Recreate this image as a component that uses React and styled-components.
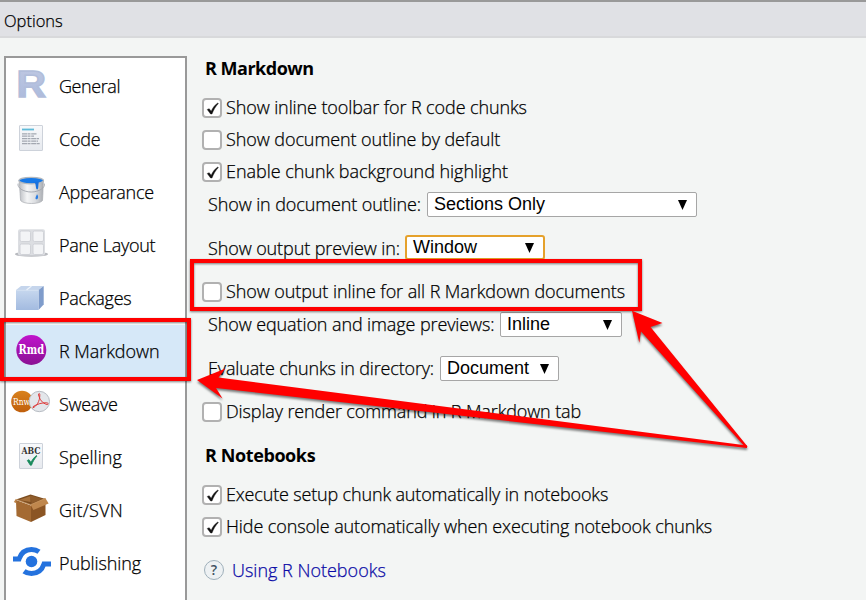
import React from 'react';
import styled, { createGlobalStyle, css } from 'styled-components';

const GlobalStyle = createGlobalStyle`
  *, *::before, *::after { box-sizing: border-box; }
  body { margin: 0; overflow: hidden; background: #f3f5f4; }
`;

const Dialog = styled.div`
  position: relative;
  display: flex;
  flex-direction: column;
  width: 866px;
  height: 600px;
  overflow: hidden;
  background: #f3f5f4;
  color: #000;
  font-family: 'Open Sans', 'Noto Sans', sans-serif;
  font-size: 18px;
  font-weight: 300;
`;

const TitleBar = styled.header`
  flex: none;
  height: 38px;
  padding: 0 4px;
  border-top: 2px solid #999;
  border-bottom: 2px solid #d8d9db;
  background: #e0e1e5;
  font-size: 16.5px;
  line-height: 38px;
`;

const Body = styled.div`
  display: flex;
  align-items: flex-start;
  padding: 18px 0 0 4px;
`;

const Sidebar = styled.nav`
  flex: none;
  width: 183px;
  height: 560px;
  padding-top: 2px;
  border: 2px solid #999;
  background: #fff;
`;

const NavItem = styled.div`
  display: flex;
  align-items: center;
  height: 53px;
  padding-left: 4px;
  background: ${(p) => (p.$active ? '#d6e8f8' : 'transparent')};
`;

const NavIcon = styled.svg`
  flex: none;
  display: block;
  width: 44px;
  height: 53px;
`;

const NavLabel = styled.span`
  margin-left: 5px;
  padding-bottom: 2px;
  line-height: 26px;
`;

const Text = styled.span`
  white-space: nowrap;
  letter-spacing: ${(p) => p.$track || 0}px;
  -webkit-text-stroke: 0.25px currentColor;
`;

const Panel = styled.main`
  display: flex;
  flex-direction: column;
  padding-left: 15px;
`;

const Row = styled.div`
  display: flex;
  align-items: center;
  height: 26px;
  margin-top: ${(p) => p.$gap}px;
  line-height: 26px;
`;

const OptionRow = styled(Row)`
  line-height: 24px;

  & > ${Text} {
    padding-bottom: 2px;
  }
`;

const SelectRow = styled(Row)`
  align-items: flex-start;
  padding-left: 6px;
  line-height: ${(p) => (p.$focused ? 26 : 24)}px;
`;

const Heading = styled.h2`
  height: 26px;
  margin: ${(p) => p.$gap}px 0 0;
  padding-left: 3px;
  font-size: 18px;
  font-weight: 700;
  line-height: 24px;

  & > ${Text} {
    -webkit-text-stroke: 0;
  }
`;

const Box = styled.span`
  flex: none;
  display: flex;
  width: 20px;
  height: 20px;
  margin-right: 4px;
  border: 2px solid #b1b1b1;
  border-radius: 4px;
  background: #fff;
`;

const Select = styled.div`
  flex: none;
  display: flex;
  align-items: center;
  justify-content: space-between;
  width: ${(p) => p.$width}px;
  height: 25px;
  margin-left: ${(p) => p.$offset}px;
  padding: 0 9px 2px 6px;
  border: 1px solid #a6a6a6;
  border-radius: 2px;
  background: #fff;
  font-family: 'Liberation Sans', Arial, sans-serif;
  font-size: 18px;
  font-weight: 400;
  ${(p) => p.$focused && css`
    border: 2px solid #e5a12b;
    border-radius: 3px;
  `}
`;

const Caret = styled.svg`
  display: block;
  width: 9px;
  height: 10px;
  margin-top: 2px;
`;

const HelpMark = styled.span`
  flex: none;
  width: 20px;
  height: 20px;
  margin: 0 8px 0 2px;
  border: 1px solid #9fb0bb;
  border-radius: 50%;
  background: #edf1f3;
  color: #3d5060;
  font-size: 14px;
  font-weight: 600;
  line-height: 18px;
  text-align: center;
`;

const Link = styled(Text)`
  color: #0a0aa6;
`;

const Highlight = styled.div`
  position: absolute;
  left: ${(p) => p.$x}px;
  top: ${(p) => p.$y}px;
  width: ${(p) => p.$w}px;
  height: ${(p) => p.$h}px;
  border: 4px solid #f00;
  filter: drop-shadow(0 1.5px 1px rgba(0, 0, 0, 0.5));
`;

const Arrows = styled.svg`
  position: absolute;
  inset: 0;
  width: 866px;
  height: 600px;
  filter: drop-shadow(0 2px 1.2px rgba(0, 0, 0, 0.5));
`;

const Page = ({ children }) => (
  <>
    <rect x="9.5" y="12.5" width="23" height="25" rx="0.5" fill="url(#paper)" stroke="#cdd2da" />
    {children}
  </>
);

const icons = {
  general: (
    <text x="6.6" y="37.4" fontFamily="Liberation Sans" fontWeight="700" fontSize="37" textLength="29.5" lengthAdjust="spacingAndGlyphs" fill="url(#rfill)" stroke="#b1bdda" strokeWidth="1.5">R</text>
  ),
  code: (
    <Page>
      <path d="M12 16.5h12" stroke="#5fbad8" strokeWidth="1.8" />
      <path d="M12 20.8h15M12 23.2h12M12 25.7h17M12 28.2h16M12 30.7h18" stroke="#a3a8b1" strokeWidth="1.3" strokeDasharray="5 .5 3 .7" />
    </Page>
  ),
  appearance: (
    <>
      <path d="M9 14c1 9 1 14 1.6 20.5 3 4 19 4 21.9 0C33 28 33 22 33.4 14z" fill="url(#metal)" stroke="#a8abb0" strokeWidth="0.7" />
      <ellipse cx="21.2" cy="14.6" rx="12.3" ry="3.2" fill="#1679e8" stroke="#b3b8be" strokeWidth="1.2" />
      <path d="M23 16c2.5.2 2.500 2 3 5.500.3 2.600 2 2.600 2.200 0l.5-6z" fill="#1771df" />
      <path d="M25.500 32.200c0-2 1.300-3 1.500-4 1.200 1.200 1.500 3.500.6 4.500-.7.8-2.100.7-2.100-.5z" fill="#2a7de4" />
      <path d="M8.200 17.500c-1.500 4 5 8.500 13 8.500s14.500-4.500 13-8.500" fill="none" stroke="#a0a5ad" strokeWidth="0.9" />
    </>
  ),
  panes: (
    <>
      <ellipse cx="21.5" cy="35.2" rx="16.5" ry="2.6" fill="#b9bbc0" />
      <rect x="8" y="10.2" width="27" height="26.3" rx="2" fill="#dcdee2" />
      {[[10, 12], [23, 12], [10, 25], [23, 25]].map(([x, y]) => (
        <rect key={`${x}-${y}`} x={x} y={y} width="10.5" height="10.5" rx="1.5" fill="#f3f4f6" stroke="#c9ccd2" strokeWidth="0.8" />
      ))}
    </>
  ),
  packages: (
    <>
      <path d="M6 18l5-4h22.700l-5.200 4z" fill="#c5d5ec" />
      <path d="M28.500 18l5.200-4v18.500l-5.200 5.500z" fill="#7f9ccb" />
      <rect x="6" y="18" width="22.5" height="20" fill="url(#cube)" />
      <path d="M16.500 18l5-4" stroke="#eef4fb" strokeWidth="1.2" />
      <path d="M6.300 18.300h22.200" stroke="#dbe6f4" strokeWidth="0.7" />
    </>
  ),
  rmarkdown: (
    <>
      <circle cx="21.3" cy="25" r="15" fill="url(#purple)" />
      <text x="21.3" y="28.8" textAnchor="middle" textLength="25.5" lengthAdjust="spacingAndGlyphs" fontFamily="DejaVu Serif" fontWeight="700" fontSize="12" fill="#fff">Rmd</text>
    </>
  ),
  sweave: (
    <>
      <circle cx="12" cy="23.5" r="10.8" fill="url(#orange)" />
      <text x="3" y="27" textLength="17" lengthAdjust="spacingAndGlyphs" fontFamily="DejaVu Serif" fontSize="9" fill="#fff">Rnw</text>
      <circle cx="29.3" cy="23.5" r="10.2" fill="#e3e6ea" stroke="#b7bcc3" strokeWidth="1" />
      <path d="M22.500 30c4-1.500 7.500-6.500 7.300-13.500-.1-1.600-1.600-1.300-1.200.5 1 4.500 4 8.500 8.400 9.500 1.600.2 1.500-1.600-.2-1.700-4.300-.3-9.500 1-14 4" fill="none" stroke="#dd3b3b" strokeWidth="1" />
    </>
  ),
  spelling: (
    <Page>
      <text x="11.5" y="22.5" textLength="19" lengthAdjust="spacingAndGlyphs" fontFamily="DejaVu Serif" fontWeight="700" fontSize="8.5" fill="#333">ABC</text>
      <path d="M17.300 29.500l1.700-.8 2 2.800c1-2.500 3-5 5.500-7l.3.700c-2.300 2.500-4 5.500-5.300 9h-1.200z" fill="#16895b" stroke="#16895b" strokeWidth="0.8" />
    </Page>
  ),
  git: (
    <>
      <path d="M6 15.500l14.500-5 15 4.500-14.500 6z" fill="#7c4d20" />
      <path d="M9 16l11.500-4v6z" fill="#a8713a" />
      <path d="M20.500 11.500l12 3.500-11 4.500z" fill="#8f5c2b" />
      <path d="M6 16l15 5.500V38L6.500 32z" fill="#a46a32" />
      <path d="M21 21.500l14.500-6V31L21 38z" fill="#8b5524" />
      <path d="M6 14.700L3.800 18l2.500 1.200z" fill="#bd8449" />
      <path d="M35.300 14l3.300 5.500-15.200 6.500-2.800-5.300z" fill="#bf874d" />
      <path d="M6 15.300l14.600 5.400 14.700-6.200" fill="none" stroke="#c8965f" strokeWidth="0.8" />
    </>
  ),
  publishing: (
    <>
      <circle cx="21.5" cy="24.5" r="5.8" fill="#2472de" />
      <path d="M3 22h6C11 16 15.500 12.500 21.500 12.500c3 0 5.500.8 7.500 2.300" fill="none" stroke="#2472de" strokeWidth="5" />
      <path d="M41 27h-7c-2 6-6.500 9.500-12.500 9.500-3 0-5.500-.8-7.500-2.300" fill="none" stroke="#2472de" strokeWidth="5" />
    </>
  ),
};

const Gradient = ({ id, stops, across }) => (
  <linearGradient id={id} x1="0" y1="0" x2={across ? 1 : 0} y2={across ? 0 : 1}>
    {stops.map((color, i) => (
      <stop key={i} offset={i / (stops.length - 1)} stopColor={color} />
    ))}
  </linearGradient>
);

const Definitions = styled.svg`
  position: absolute;
  width: 0;
  height: 0;
`;

const Check = () => (
  <svg width="16" height="16" viewBox="0 0 16 16">
    <path d="M3.200 9.500l2-.8 2 2.600C8.500 8 10.500 5.200 13.800 3l.6.500C11.600 6.500 9.600 9.800 8 14H6.600z" fill="#111" stroke="#111" strokeWidth="0.4" />
  </svg>
);

const Option = ({ gap, checked, track, children }) => (
  <OptionRow $gap={gap}>
    <Box role="checkbox" aria-checked={!!checked}>{checked && <Check />}</Box>
    <Text $track={track}>{children}</Text>
  </OptionRow>
);

const Choice = ({ gap, label, track, value, width, offset, focused }) => (
  <SelectRow $gap={gap} $focused={focused}>
    <Text $track={track}>{label}</Text>
    <Select $width={width} $offset={offset} $focused={focused}>
      {value}
      <Caret viewBox="0 0 9 10"><path d="M0 0h9L4.500 10z" /></Caret>
    </Select>
  </SelectRow>
);

const sections = [
  ['general', 'General', -0.42],
  ['code', 'Code', -0.2],
  ['appearance', 'Appearance', -0.23],
  ['panes', 'Pane Layout', -0.3],
  ['packages', 'Packages', -0.25],
  ['rmarkdown', 'R Markdown', -0.06],
  ['sweave', 'Sweave', -0.32],
  ['spelling', 'Spelling', 0.03],
  ['git', 'Git/SVN', 0.22],
  ['publishing', 'Publishing', -0.1],
];

export default function App() {
  return (
    <Dialog>
      <GlobalStyle />
      <Definitions>
        <defs>
          <Gradient id="paper" stops={['#f8f9fb', '#e6e9ee']} />
          <Gradient id="rfill" stops={['#c0c9e2', '#a8b8dc']} />
          <Gradient id="metal" across stops={['#b9bcc1', '#f4f5f6', '#dcdee1', '#a9acb1']} />
          <Gradient id="cube" stops={['#c6d7ee', '#a3bbe0']} />
          <Gradient id="purple" stops={['#c013cc', '#8a1193']} />
          <Gradient id="orange" stops={['#d9821d', '#c05f0c']} />
        </defs>
      </Definitions>
      <TitleBar><Text>Options</Text></TitleBar>
      <Body>
        <Sidebar>
          {sections.map(([id, label, track]) => (
            <NavItem key={id} $active={id === 'rmarkdown'}>
              <NavIcon viewBox="0 0 44 53">{icons[id]}</NavIcon>
              <NavLabel><Text $track={track}>{label}</Text></NavLabel>
            </NavItem>
          ))}
        </Sidebar>
        <Panel>
          <Heading $gap={0}><Text $track={-0.5}>R Markdown</Text></Heading>
          <Option gap={13} checked track={-0.105}>Show inline toolbar for R code chunks</Option>
          <Option gap={6} track={-0.08}>Show document outline by default</Option>
          <Option gap={6} checked track={-0.035}>Enable chunk background highlight</Option>
          <Choice gap={7} label="Show in document outline:" track={-0.111} value="Sections Only" width={270} offset={6} />
          <Choice gap={17} label="Show output preview in:" track={-0.106} value="Window" width={140} offset={5} focused />
          <Option gap={18} track={-0.085}>Show output inline for all R Markdown documents</Option>
          <Choice gap={7} label="Show equation and image previews:" track={-0.103} value="Inline" width={122} offset={5.5} />
          <Choice gap={18} label="Evaluate chunks in directory:" track={-0.155} value="Document" width={119} offset={6} />
          <Option gap={17} track={-0.125}>Display render command in R Markdown tab</Option>
          <Heading $gap={18}><Text $track={-0.4}>R Notebooks</Text></Heading>
          <Option gap={13} checked track={-0.16}>Execute setup chunk automatically in notebooks</Option>
          <Option gap={6} checked track={-0.11}>Hide console automatically when executing notebook chunks</Option>
          <Row $gap={17}>
            <HelpMark>?</HelpMark>
            <Link>Using R Notebooks</Link>
          </Row>
        </Panel>
      </Body>
      <Highlight $x={0} $y={318} $w={191} $h={63} />
      <Highlight $x={190} $y={259} $w={452} $h={52} />
      <Arrows viewBox="0 0 866 600" fill="#f00">
        <path d="M197 380L225.500 368.500L218.500 377.500L747 445.500L747 448L216 388L222.500 398.500Z" />
        <path d="M632 310.700L662.500 323L650.500 327L747.500 446.500L746 448L641 331.500L639.300 342.700Z" />
      </Arrows>
    </Dialog>
  );
}
